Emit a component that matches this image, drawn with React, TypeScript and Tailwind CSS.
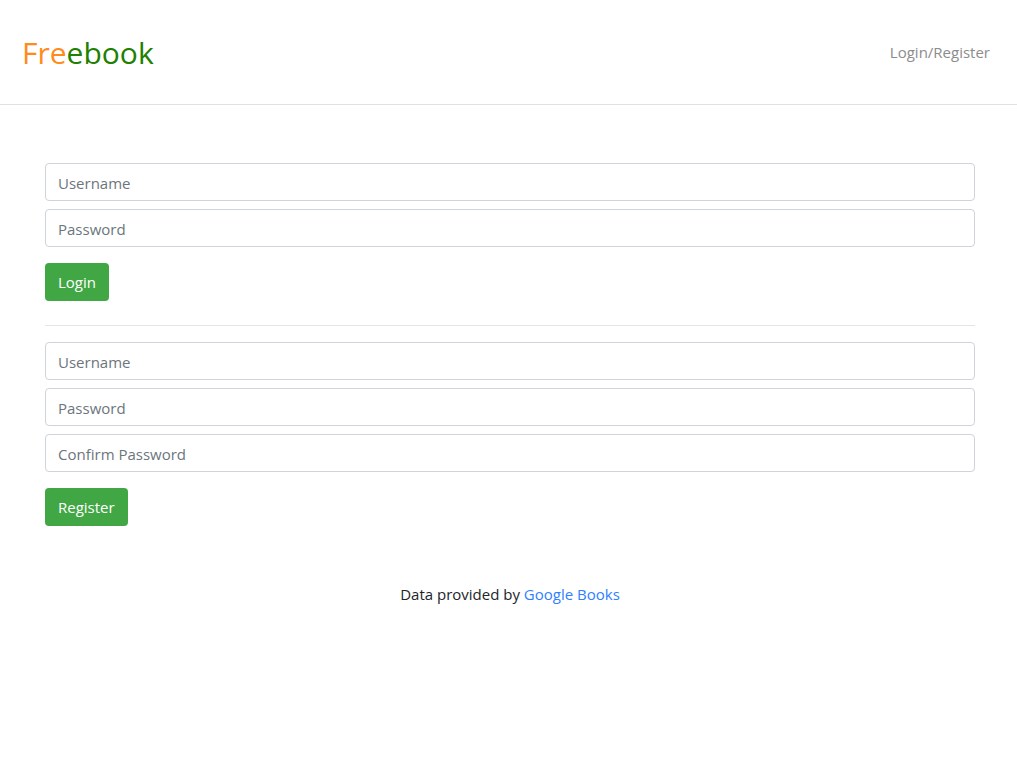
import React from "react";

function Field({ label, type = "text" }: { label: string; type?: string }) {
  return (
    <input
      type={type}
      aria-label={label}
      placeholder={label}
      className="block h-[38px] w-full rounded border border-[#ced4da] bg-white px-3 pt-0.5 text-[15px] text-[#495057] placeholder:text-[#6c757d] focus:border-[#80bdff] focus:outline-none"
    />
  );
}

function SubmitButton({ children }: { children: React.ReactNode }) {
  return (
    <button
      type="submit"
      className="mt-2 h-[38px] self-start rounded bg-[#41a744] px-[13px] text-[15px] font-medium text-white hover:bg-[#37913a]"
    >
      {children}
    </button>
  );
}

export default function App() {
  const stop = (e: React.FormEvent) => e.preventDefault();
  return (
    <div className="bg-white font-['Open_Sans','Noto_Sans',sans-serif] text-[15px] leading-6 text-[#212529]">
      <header className="flex h-[105px] items-center justify-between border-b border-[#dee2e6] pr-[27px] pl-[22px]">
        <a href="#" className="pt-0.5 text-[30px] leading-[48px] text-[#228000]">
          <span className="text-[#ff8c1a]">Fre</span>ebook
        </a>
        <a href="#login" className="text-[#8c8c8c]">Login/Register</a>
      </header>
      <main className="pt-[58px] pr-[42px] pl-[45px]">
        <form onSubmit={stop} className="flex flex-col gap-2">
          <Field label="Username" />
          <Field label="Password" type="password" />
          <SubmitButton>Login</SubmitButton>
        </form>
        <hr className="mt-6 mb-4 border-[#e5e5e5]" />
        <form onSubmit={stop} className="flex flex-col gap-2">
          <Field label="Username" />
          <Field label="Password" type="password" />
          <Field label="Confirm Password" type="password" />
          <SubmitButton>Register</SubmitButton>
        </form>
      </main>
      <footer className="pt-14 pl-[3px] text-center">
        Data provided by <a href="#google-books" className="text-[#2f80ff]">Google Books</a>
      </footer>
    </div>
  );
}
